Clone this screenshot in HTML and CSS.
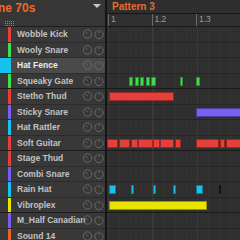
FILE: index.html
```html
<!DOCTYPE html>
<html>
	<head>
		<title>Group Sounds</title>
		<link rel="stylesheet" href="styles.css">
	</head>

	<body>
		<div class="app">

			<div class="sounds">
				<div class="group-head">
					<div class="group-title">
						<span class="group-name">Machine 70s</span>
						<span class="drop"></span>
					</div>
					<div class="grid-icon">
						<svg width="9" height="9" viewBox="0 0 9 9">
							<g fill="#8a8a8a">
								<rect x="0" y="0" width="1" height="1"/><rect x="2" y="0" width="1" height="1"/><rect x="4" y="0" width="1" height="1"/><rect x="6" y="0" width="1" height="1"/><rect x="8" y="0" width="1" height="1"/>
								<rect x="0" y="2" width="1" height="1"/><rect x="2" y="2" width="1" height="1"/><rect x="4" y="2" width="1" height="1"/><rect x="6" y="2" width="1" height="1"/><rect x="8" y="2" width="1" height="1"/>
								<rect x="0" y="4" width="1" height="1"/><rect x="2" y="4" width="1" height="1"/><rect x="4" y="4" width="1" height="1"/><rect x="6" y="4" width="1" height="1"/><rect x="8" y="4" width="1" height="1"/>
								<rect x="0" y="6" width="1" height="1"/><rect x="2" y="6" width="1" height="1"/><rect x="4" y="6" width="1" height="1"/><rect x="6" y="6" width="1" height="1"/><rect x="8" y="6" width="1" height="1"/>
								<rect x="0" y="8" width="1" height="1"/><rect x="2" y="8" width="1" height="1"/><rect x="4" y="8" width="1" height="1"/><rect x="6" y="8" width="1" height="1"/><rect x="8" y="8" width="1" height="1"/>
							</g>
						</svg>
					</div>
				</div>

				<div id="sound-list"></div>
			</div>

			<div class="pattern">
				<div class="pattern-head">Pattern 3</div>
				<div class="ruler">
					<span class="beat">1</span>
					<span class="beat">1.2</span>
					<span class="beat">1.3</span>
				</div>
				<div id="lanes"></div>
			</div>

		</div>

<script>
	var sounds = [
		{ name: "Wobble Kick", color: "#e5403a", notes: [] },
		{ name: "Wooly Snare", color: "#3ee04a", notes: [] },
		{ name: "Hat Fence", color: "#18c2ee", notes: [], selected: true },
		{ name: "Squeaky Gate", color: "#3ee04a", notes: [[22,4],[27.5,4],[33,4],[38.5,4],[44,4.5],[72.5,3.5],[89,4]] },
		{ name: "Stetho Thud", color: "#e5403a", notes: [[2,65]] },
		{ name: "Sticky Snare", color: "#7a5ef0", notes: [[89,60]] },
		{ name: "Hat Rattler", color: "#18c2ee", notes: [] },
		{ name: "Soft Guitar", color: "#e5403a", notes: [[0,11],[12,10.5],[23.5,7],[31,14.5],[46,6.5],[53,14],[68,6],[89,22.5],[112.5,5],[118.5,20]] },
		{ name: "Stage Thud", color: "#e5403a", notes: [] },
		{ name: "Combi Snare", color: "#7a5ef0", notes: [] },
		{ name: "Rain Hat", color: "#18c2ee", notes: [[2,6.5],[23.5,3.5],[45.5,3.5],[65.5,3.5],[89,6.5]], dark: [112, 1.5] },
		{ name: "Vibroplex", color: "#e8e400", notes: [[2,97.5]] },
		{ name: "M_Half Canadian", color: "#7a5ef0", notes: [] },
		{ name: "Sound 14", color: "#f0602c", notes: [] }
	];

	var list = document.getElementById("sound-list");
	var lanes = document.getElementById("lanes");

	for (var i = 0; i < sounds.length; i++) {
		var s = sounds[i];
		var groupEnd = (i % 4 == 3) ? " group-end" : "";

		var row = document.createElement("div");
		row.className = "sound" + groupEnd + (s.selected ? " selected" : "");
		row.innerHTML =
			'<span class="strip" style="background:' + s.color + '"></span>' +
			'<span class="sound-name">' + s.name + '</span>' +
			'<span class="knobs">' +
				'<svg width="21" height="10" viewBox="0 0 21 10">' +
					'<g fill="none" stroke="#686868" stroke-width="1">' +
						'<circle cx="4.5" cy="5" r="4.2"/>' +
						'<path d="M4.5 5 L2.6 3"/>' +
						'<path d="M14.3 1.6 A4.2 4.2 0 1 0 17.7 1.6"/>' +
						'<path d="M16 0.8 L16 4"/>' +
					'</g>' +
				'</svg>' +
			'</span>';
		list.appendChild(row);

		var lane = document.createElement("div");
		lane.className = "lane" + groupEnd;
		for (var n = 0; n < s.notes.length; n++) {
			var note = document.createElement("span");
			note.className = "note";
			note.style.left = s.notes[n][0] + "px";
			note.style.width = s.notes[n][1] + "px";
			note.style.background = s.color;
			lane.appendChild(note);
		}
		if (s.dark) {
			var d = document.createElement("span");
			d.className = "note ghost";
			d.style.left = s.dark[0] + "px";
			d.style.width = s.dark[1] + "px";
			lane.appendChild(d);
		}
		lanes.appendChild(lane);
	}
</script>

	</body>
</html>
```

FILE: styles.css
```css
		body {
			margin: 0;
			width: 240px;
			height: 240px;
			overflow: hidden;
			background-color: #2c2c2c;
			font-family: "Liberation Sans", sans-serif;
		}

		.app {
			display: flex;
			height: 240px;
		}

		/* left column: sound list */

		.sounds {
			width: 105px;
			flex: none;
			background-color: #383838;
			border-right: 2px solid #161616;
		}

		.group-head {
			height: 26px;
			border-bottom: 1px solid #1e1e1e;
			background-color: #363636;
			overflow: hidden;
		}

		.group-title {
			display: flex;
			align-items: center;
			justify-content: space-between;
			height: 16px;
			padding-right: 4px;
		}

		.group-name {
			color: #ea6a2c;
			font-size: 12px;
			font-weight: bold;
			white-space: nowrap;
			margin-left: -36px;
		}

		.drop {
			width: 0;
			height: 0;
			border-left: 4px solid transparent;
			border-right: 4px solid transparent;
			border-top: 4px solid #c8c8c8;
			margin-top: -4px;
		}

		.grid-icon {
			padding-left: 5px;
			height: 10px;
		}

		.sound {
			display: flex;
			align-items: center;
			height: 15.5px;
			box-sizing: border-box;
			border-bottom: 1px solid #2c2c2c;
		}

		.sound.group-end {
			border-bottom-color: #1c1c1c;
		}

		.strip {
			width: 3px;
			height: 100%;
			margin-left: 8px;
			flex: none;
		}

		.sound.selected {
			background-color: #4a4a4a;
		}

		.sound.selected .strip {
			width: 11px;
			margin-left: 0;
		}

		.sound-name {
			flex: 1;
			min-width: 0;
			padding-left: 6px;
			color: #c2c2c2;
			font-size: 8.5px;
			font-weight: bold;
			white-space: nowrap;
		}

		.sound.selected .sound-name {
			color: #ececec;
		}

		.knobs {
			width: 22px;
			flex: none;
			display: flex;
		}

		/* right column: pattern editor */

		.pattern {
			flex: 1;
			overflow: hidden;
		}

		.pattern-head {
			height: 13px;
			padding-left: 5px;
			border-bottom: 1px solid #161616;
			background-color: #2e2e2e;
			color: #ea6a2c;
			font-size: 10px;
			font-weight: bold;
			line-height: 14px;
		}

		.ruler {
			display: flex;
			height: 12px;
			border-bottom: 1px solid #1a1a1a;
			background-color: #303030;
		}

		.beat {
			width: 44.5px;
			flex: none;
			box-sizing: border-box;
			border-left: 1px solid #6a6a6a;
			padding-left: 2px;
			color: #9a9a9a;
			font-size: 8.5px;
			line-height: 11px;
		}

		.beat:first-child {
			margin-left: 1px;
			width: 43.5px;
		}

		.lane {
			position: relative;
			height: 15.5px;
			box-sizing: border-box;
			border-bottom: 1px solid #262626;
			background-color: #2f2f2f;
			background-image:
				repeating-linear-gradient(90deg, #3a3a3a 0 1px, transparent 1px 44.5px),
				repeating-linear-gradient(90deg, #343434 0 1px, transparent 1px 11.125px);
			background-position: 1px 0, 1px 0;
		}

		.lane.group-end {
			border-bottom-color: #1a1a1a;
		}

		.note {
			position: absolute;
			top: 3px;
			height: 9px;
			box-sizing: border-box;
			border: 1px solid rgba(0, 0, 0, 0.35);
		}

		.note.ghost {
			background-color: #151515;
			border: none;
		}
```
